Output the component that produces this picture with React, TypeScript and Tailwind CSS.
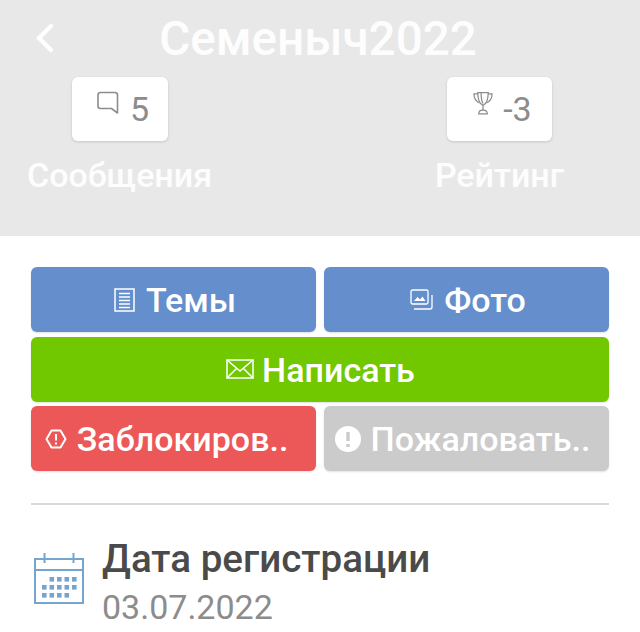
import type { ReactNode } from 'react'

function BackIcon() {
  return (
    <svg width="22" height="32" viewBox="0 0 22 32" fill="none" stroke="#ffffff" strokeWidth="4.2" aria-hidden="true">
      <path d="M19 4 L7 16 L19 28" strokeLinecap="round" strokeLinejoin="miter" />
    </svg>
  )
}

function BubbleIcon() {
  return (
    <svg width="24" height="24" viewBox="0 0 24 24" fill="none" stroke="#8c8c8c" strokeWidth="1.6" aria-hidden="true">
      <path d="M4.5 1.5 H19 Q21.5 1.5 21.5 4 V22 L15.5 17.5 H4.5 Q2 17.5 2 15 V4 Q2 1.5 4.5 1.5 Z" strokeLinejoin="round" />
    </svg>
  )
}

function TrophyIcon() {
  return (
    <svg width="20" height="24" viewBox="0 0 21 25" fill="none" stroke="#8c8c8c" strokeWidth="1.3" aria-hidden="true">
      <path d="M5 1.5 H16 C16 8 15 13 10.5 15 C6 13 5 8 5 1.5 Z" />
      <path d="M5 3 H1 C1 8 3.5 11 7 12.5" />
      <path d="M16 3 H20 C20 8 17.5 11 14 12.5" />
      <path d="M8.5 2 C8.5 7 9 10.5 10.5 13" />
      <path d="M10.5 15 V20" />
      <path d="M6 24 C6 21 8 20 10.5 20 C13 20 15 21 15 24 Z" />
    </svg>
  )
}

function ListIcon() {
  return (
    <svg width="21" height="24" viewBox="0 0 21 24" fill="none" stroke="#ffffff" aria-hidden="true">
      <path d="M1 1 H20 V23 H1 Z" strokeWidth="1.5" />
      <path d="M5 5.5 H16 M5 9 H16 M5 12.5 H16 M5 16 H16 M5 19.5 H16" strokeWidth="1.5" />
    </svg>
  )
}

function PhotoIcon() {
  return (
    <svg width="23" height="21" viewBox="0 0 23 21" fill="none" stroke="#ffffff" strokeWidth="1.3" aria-hidden="true">
      <rect x="1" y="1" width="17" height="14" rx="1.5" />
      <path d="M4 20 H20 Q22 20 22 18 V6" />
      <path d="M4 12 L7.5 8 L10 10.5 L12.5 7.5 L15.5 12 Z" fill="#ffffff" stroke="none" />
    </svg>
  )
}

function MailIcon() {
  return (
    <svg width="28" height="20" viewBox="0 0 28 20" fill="none" stroke="#ffffff" strokeWidth="1.5" aria-hidden="true">
      <rect x="1" y="1" width="26" height="18" />
      <path d="M1 1 L14 12 L27 1 M1 19 L10.5 9.5 M27 19 L17.5 9.5" />
    </svg>
  )
}

function HexagonIcon() {
  return (
    <svg width="22" height="20" viewBox="0 0 22 20" fill="none" aria-hidden="true">
      <path d="M6.5 1.5 H15.5 L20.5 10 L15.5 18.5 H6.5 L1.5 10 Z" stroke="#ffffff" strokeWidth="2" strokeLinejoin="round" />
      <path d="M11 5 V11.5 M11 13.5 V15.5" stroke="#ffffff" strokeWidth="2" />
    </svg>
  )
}

function AlertIcon() {
  return (
    <svg width="26" height="26" viewBox="0 0 26 26" aria-hidden="true">
      <circle cx="13" cy="13" r="13" fill="#ffffff" />
      <path d="M13 6 V15 M13 18 V21" stroke="#cbcbcb" strokeWidth="3.4" fill="none" />
    </svg>
  )
}

function CalendarIcon() {
  const dots = [
    [15.5, 24], [23, 24], [30.5, 24], [38, 24],
    [8, 32], [15.5, 32], [23, 32], [30.5, 32], [38, 32],
    [8, 40], [15.5, 40], [23, 40], [30.5, 40],
  ]

  return (
    <svg width="50" height="52" viewBox="0 0 50 52" fill="none" stroke="#75a5cf" strokeWidth="2" aria-hidden="true">
      <path d="M1 6 H49 V50 H1 Z" />
      <path d="M1 17 H49" />
      <path d="M10.5 0 V10 M39.5 0 V10" />
      {dots.map(([x, y]) => (
        <rect key={`${x}-${y}`} x={x} y={y} width="4.6" height="4.6" fill="#75a5cf" stroke="none" />
      ))}
    </svg>
  )
}

function Stat({ icon, value, label, boxClass }: { icon: ReactNode; value: string; label: string; boxClass: string }) {
  return (
    <div className="flex flex-col items-center">
      <div className={`flex h-[64px] items-center justify-center gap-[10px] rounded-md bg-white shadow-[0_1px_3px_rgba(0,0,0,0.15)] ${boxClass}`}>
        <span className="-mt-[13px]">{icon}</span>
        <span className="text-[34px] leading-none text-[#8c8c8c]">{value}</span>
      </div>
      <span className="mt-[14px] text-[34px] leading-[40px] font-medium text-white/90">{label}</span>
    </div>
  )
}

function ActionButton({ icon, label, bg, className = '' }: { icon: ReactNode; label: string; bg: string; className?: string }) {
  return (
    <button type="button" className={`flex h-[65px] items-center justify-center rounded-md text-white shadow-[0_1px_2px_rgba(0,0,0,0.12)] ${bg} ${className}`}>
      {icon}
      <span className="mt-[1px] text-[34px] leading-none font-medium whitespace-nowrap">{label}</span>
    </button>
  )
}

export default function App() {
  return (
    <div className="h-[632px] w-[640px] overflow-hidden bg-white font-['Roboto',sans-serif]">
      <header className="h-[236px] bg-[#e8e8e8] pt-[8px]">
        <div className="relative flex h-[64px] items-center justify-center pr-[4px]">
          <span className="absolute top-[14px] left-[32px]">
            <BackIcon />
          </span>
          <h1 className="text-[47.6px] leading-none font-medium text-white/95">Семеныч2022</h1>
        </div>
        <div className="mt-[5px] flex justify-between pr-[76px] pl-[27px]">
          <Stat icon={<BubbleIcon />} value="5" label="Сообщения" boxClass="w-[96px] pl-[6px]" />
          <Stat icon={<TrophyIcon />} value="-3" label="Рейтинг" boxClass="w-[105px] pl-[6px]" />
        </div>
      </header>

      <main className="px-[31px] pt-[31px]">
        <div className="grid grid-cols-2 gap-x-[8px] gap-y-[4.5px]">
          <ActionButton icon={<ListIcon />} label="Темы" bg="bg-[#648fcc]" className="gap-[11px] pl-[3px]" />
          <ActionButton icon={<PhotoIcon />} label="Фото" bg="bg-[#648fcc]" className="gap-[11px] pl-[3px]" />
          <ActionButton icon={<MailIcon />} label="Написать" bg="bg-[#72c800]" className="col-span-2 gap-[8px] pl-[1px]" />
          <ActionButton icon={<HexagonIcon />} label="Заблокиров.." bg="bg-[#ec5757]" className="gap-[10px] pr-[14px]" />
          <ActionButton icon={<AlertIcon />} label="Пожаловать.." bg="bg-[#cbcbcb]" className="gap-[10px] pr-[8px]" />
        </div>

        <hr className="mt-[32px] border-t-2 border-[#d9d9d9]" />

        <div className="mt-[30px] flex gap-[18px] pl-[3px]">
          <span className="mt-[18px]">
            <CalendarIcon />
          </span>
          <div className="flex flex-col">
            <span className="text-[38.6px] leading-[48px] font-medium text-[#4a4a4a]">Дата регистрации</span>
            <span className="text-[34px] leading-[48px] text-[#8c8c8c]">03.07.2022</span>
          </div>
        </div>
      </main>
    </div>
  )
}
